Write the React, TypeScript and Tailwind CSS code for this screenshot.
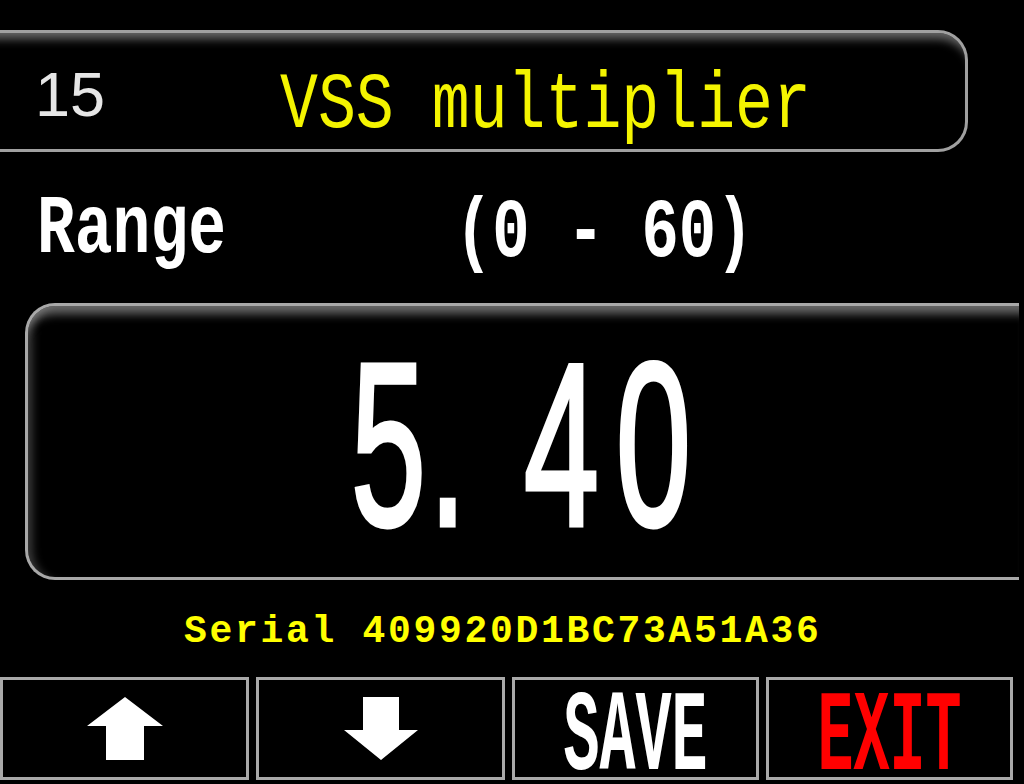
import React from "react";

const mono = "font-['Liberation_Mono','DejaVu_Sans_Mono',monospace]";
const sans = "font-['Liberation_Sans',Arial,sans-serif]";

function UpArrow() {
  return (
    <svg width="76" height="63" viewBox="0 0 76 63">
      <polygon points="38,0 76,29 57,29 57,63 19,63 19,29 0,29" fill="#ffffff" />
    </svg>
  );
}

function DownArrow() {
  return (
    <svg width="74" height="63" viewBox="0 0 74 63">
      <polygon points="19,0 55,0 55,33 74,33 37,63 0,33 19,33" fill="#ffffff" />
    </svg>
  );
}

function Key({ width, children }: { width: string; children: React.ReactNode }) {
  return (
    <div
      className={`${width} h-[103px] border-[3px] border-[#a9a9a9] bg-black flex items-center justify-center`}
    >
      {children}
    </div>
  );
}

const digits = [
  { c: "5", w: "w-[78px]" },
  { c: ".", w: "w-[95px]" },
  { c: "4", w: "w-[92px]" },
  { c: "0", w: "w-[90px]" },
];

export default function App() {
  return (
    <div className="w-[1024px] h-[784px] bg-black overflow-hidden flex flex-col">
      {/* parameter title bar */}
      <div className="mt-[30px] -ml-[10px] w-[978px] h-[122px] shrink-0 rounded-r-[30px] border-[3px] border-l-0 border-[#a0a0a0] shadow-[inset_0_14px_10px_-8px_rgba(170,170,170,0.6)] flex items-start">
        <div className="ml-[45px] mt-[30px] w-[70px]">
          <span className={`${sans} text-[63px] leading-none text-[#e6e6e6]`}>15</span>
        </div>
        <div className="ml-[175px] mt-[33px] w-[560px]">
          <span className={`${mono} inline-block origin-left scale-x-[0.79] text-[80px] leading-none text-[#f4f400] whitespace-nowrap`}>
            VSS multiplier
          </span>
        </div>
      </div>

      {/* allowed range */}
      <div className="mt-[36px] h-[84px] shrink-0 flex items-start">
        <div className="w-[455px] pl-[37px]">
          <span className={`${mono} inline-block origin-left scale-x-[0.75] text-[84px] leading-none font-bold text-white whitespace-pre`}>
            Range
          </span>
        </div>
        <div className="translate-y-[4px]">
          <span className={`${mono} inline-block origin-left scale-x-[0.74] text-[84px] leading-none font-bold text-white whitespace-pre`}>
            (0 - 60)
          </span>
        </div>
      </div>

      {/* current value */}
      <div className="mt-[31px] ml-[25px] w-[994px] h-[277px] shrink-0 rounded-l-[30px] border-[3px] border-r-0 border-[#a8a8a8] shadow-[inset_0_16px_10px_-8px_rgba(170,170,170,0.6),inset_12px_0_10px_-8px_rgba(140,140,140,0.45)] pt-[23px] pl-[323px] flex items-start">
        {digits.map((d, i) => (
          <div key={i} className={d.w}>
            <span
              className={`${sans} inline-block origin-left scale-x-[0.58] text-[232px] leading-none text-white [-webkit-text-stroke:5px_#ffffff]`}
            >
              {d.c}
            </span>
          </div>
        ))}
      </div>

      {/* device serial */}
      <div className={`${mono} mt-[33px] pl-[184px] h-[38px] shrink-0 text-[38px] leading-none font-bold tracking-[2.7px] text-[#ffff00] whitespace-pre`}>
        Serial 409920D1BC73A51A36
      </div>

      {/* soft keys */}
      <div className="mt-[26px] flex gap-[7px] shrink-0">
        <Key width="w-[249px]">
          <UpArrow />
        </Key>
        <Key width="w-[249px]">
          <DownArrow />
        </Key>
        <Key width="w-[247px]">
          <span className={`${mono} inline-block translate-y-[9px] scale-y-[1.92] text-[60px] leading-[46px] font-bold text-white`}>
            SAVE
          </span>
        </Key>
        <Key width="w-[247px]">
          <span className={`${mono} inline-block translate-y-[9px] scale-y-[1.92] text-[60px] leading-[46px] font-bold text-[#ff0000]`}>
            EXIT
          </span>
        </Key>
      </div>
    </div>
  );
}
